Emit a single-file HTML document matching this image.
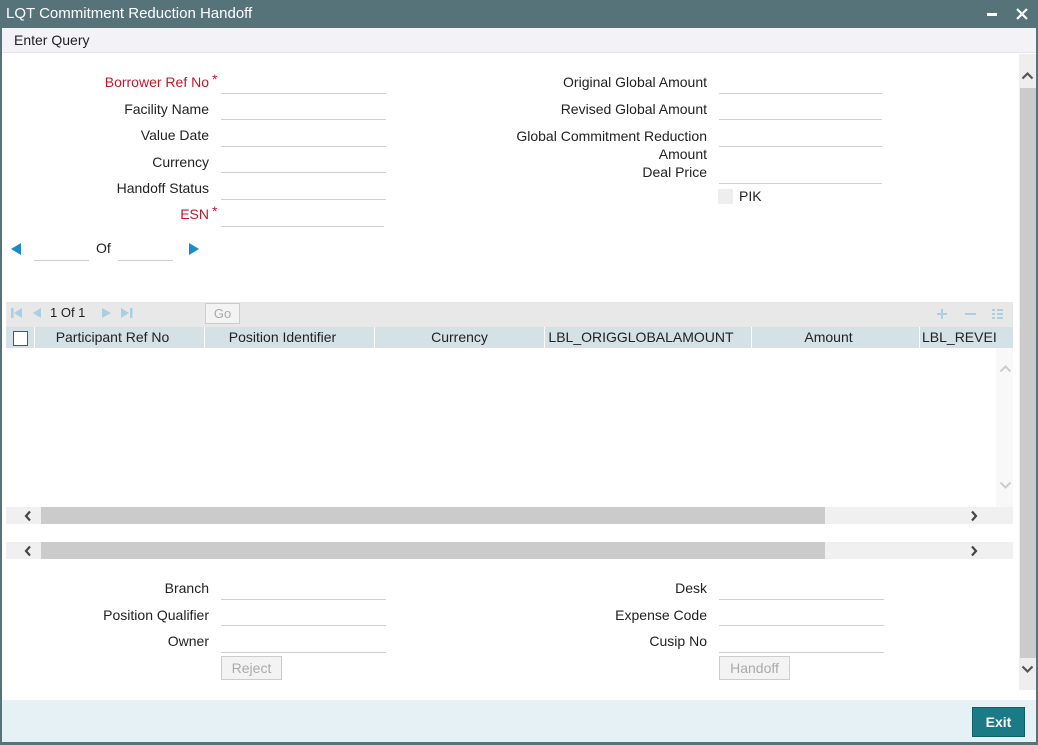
<!DOCTYPE html>
<html><head><style>
*{margin:0;padding:0;box-sizing:border-box}
body{width:1038px;height:745px;position:relative;overflow:hidden;background:#56737a;font-family:"Liberation Sans",Arial,sans-serif;font-size:14px;color:#222}
.a{position:absolute}
.lbl{position:absolute;text-align:right;white-space:nowrap}
.req{color:#c0182a}
.req b{font-weight:normal;position:absolute;top:-3px;left:100%;margin-left:3px}
.ln{position:absolute;height:1px;background:#cfcfcf}
.th{position:absolute;top:327px;height:21px;line-height:21px;text-align:center;border-right:1px solid #fff;color:#222}
.btn{position:absolute;border:1px solid #ccc;background:#f3f3f3;color:#aaa;text-align:center;line-height:22px}
svg{position:absolute}
</style></head><body>
<div class="a" style="left:0;top:0;width:1038px;height:28px;background:#56737a;color:#fff;font-size:15px;line-height:28px;padding-left:6px">LQT Commitment Reduction Handoff</div>
<div class="a" style="left:987px;top:13px;width:10px;height:3px;background:#fff"></div>
<svg style="left:1016px;top:8px" width="12" height="12"><path d="M1 1L11 11M11 1L1 11" stroke="#fff" stroke-width="2.2"/></svg>
<div class="a" style="left:2px;top:28px;width:1034px;height:714px;background:#fff"></div>
<div class="a" style="left:2px;top:28px;width:1034px;height:25px;background:#f2f2f7;border-bottom:1px solid #e4e4e4;line-height:25px;padding-left:12px">Enter Query</div>

<!-- right scrollbar -->
<div class="a" style="left:1019px;top:54px;width:17px;height:636px;background:#eee"></div>
<div class="a" style="left:1020px;top:88px;width:16px;height:570px;background:#cbcbcb"></div>
<svg style="left:1021px;top:71px" width="13" height="9"><path d="M1.5 7.5L6.5 2.5L11.5 7.5" stroke="#555" stroke-width="2.2" fill="none"/></svg>
<svg style="left:1021px;top:665px" width="13" height="9"><path d="M1.5 1.5L6.5 6.5L11.5 1.5" stroke="#555" stroke-width="2.2" fill="none"/></svg>

<!-- left fields -->
<div class="lbl req" style="right:829px;top:74px">Borrower Ref No<b>*</b></div>
<div class="lbl" style="right:829px;top:101px">Facility Name</div>
<div class="lbl" style="right:829px;top:127px">Value Date</div>
<div class="lbl" style="right:829px;top:154px">Currency</div>
<div class="lbl" style="right:829px;top:180px">Handoff Status</div>
<div class="lbl req" style="right:829px;top:206px">ESN<b>*</b></div>
<div class="ln" style="left:221px;top:93px;width:165px"></div>
<div class="ln" style="left:221px;top:119px;width:165px"></div>
<div class="ln" style="left:221px;top:146px;width:165px"></div>
<div class="ln" style="left:221px;top:172px;width:165px"></div>
<div class="ln" style="left:221px;top:199px;width:165px"></div>
<div class="ln" style="left:221px;top:226px;width:163px"></div>
<div class="a" style="left:11px;top:243px;width:0;height:0;border-top:6px solid transparent;border-bottom:6px solid transparent;border-right:10px solid #1a8ac8"></div>
<div class="ln" style="left:34px;top:260px;width:55px"></div>
<div class="a" style="left:96px;top:240px">Of</div>
<div class="ln" style="left:118px;top:260px;width:55px"></div>
<div class="a" style="left:189px;top:243px;width:0;height:0;border-top:6px solid transparent;border-bottom:6px solid transparent;border-left:10px solid #1a8ac8"></div>

<!-- right fields -->
<div class="lbl" style="right:331px;top:74px">Original Global Amount</div>
<div class="lbl" style="right:331px;top:101px">Revised Global Amount</div>
<div class="lbl" style="right:331px;top:127px;line-height:18px">Global Commitment Reduction<br>Amount</div>
<div class="lbl" style="right:331px;top:164px">Deal Price</div>
<div class="ln" style="left:719px;top:93px;width:163px"></div>
<div class="ln" style="left:719px;top:119px;width:163px"></div>
<div class="ln" style="left:719px;top:146px;width:163px"></div>
<div class="ln" style="left:719px;top:183px;width:163px"></div>
<div class="a" style="left:718px;top:189px;width:15px;height:15px;background:#eee"></div>
<div class="a" style="left:739px;top:188px">PIK</div>

<!-- grid -->
<div class="a" style="left:6px;top:302px;width:1007px;height:25px;background:#e8e8e8"></div>
<svg style="left:11px;top:307px" width="36" height="12"><rect x="0" y="1" width="2.5" height="10" fill="#a8cfe2"/><path d="M11 1L3 6L11 11Z M30 1L22 6L30 11Z" fill="#a8cfe2"/></svg>
<div class="a" style="left:50px;top:305px;font-size:13px">1 Of 1</div>
<svg style="left:101px;top:307px" width="34" height="12"><path d="M1 1L10 6L1 11Z M20 1L28 6L20 11Z" fill="#a8cfe2"/><rect x="29" y="1" width="2.5" height="10" fill="#a8cfe2"/></svg>
<div class="btn" style="left:205px;top:303px;width:35px;height:21px;line-height:19px;font-size:13px">Go</div>
<svg style="left:936px;top:308px" width="80" height="12"><path d="M6 1V11M1 6H11" stroke="#a8cfe2" stroke-width="2"/><path d="M29 6H40" stroke="#a8cfe2" stroke-width="2"/><path d="M56 2h3M56 6h3M56 10h3M61 2h6M61 6h6M61 10h6" stroke="#a8cfe2" stroke-width="2"/></svg>
<div class="a" style="left:6px;top:327px;width:1007px;height:21px;background:#d4e1e6"></div>
<div class="th" style="left:6px;width:29px"><span style="display:inline-block;width:15px;height:15px;border:1.5px solid #1a6a85;background:#fff;vertical-align:middle"></span></div>
<div class="th" style="left:35px;width:170px;padding-right:14px">Participant Ref No</div>
<div class="th" style="left:205px;width:170px;padding-right:14px">Position Identifier</div>
<div class="th" style="left:375px;width:170px">Currency</div>
<div class="th" style="left:545px;width:207px;padding-right:14px">LBL_ORIGGLOBALAMOUNT</div>
<div class="th" style="left:752px;width:168px;padding-right:14px">Amount</div>
<div class="th" style="left:920px;width:93px;border:none;text-align:left;padding-left:2px">LBL_REVEI</div>
<div class="a" style="left:996px;top:348px;width:17px;height:159px;background:#f8f8f8"></div>
<svg style="left:999px;top:364px" width="13" height="9"><path d="M1.5 7.5L6.5 2.5L11.5 7.5" stroke="#ccc" stroke-width="2" fill="none"/></svg>
<svg style="left:999px;top:481px" width="13" height="9"><path d="M1.5 1.5L6.5 6.5L11.5 1.5" stroke="#ccc" stroke-width="2" fill="none"/></svg>
<div class="a" style="left:6px;top:507px;width:1007px;height:17px;background:#f0f0f0"></div>
<div class="a" style="left:41px;top:507px;width:784px;height:17px;background:#cbcbcb"></div>
<svg style="left:24px;top:510px" width="8" height="12"><path d="M6 1.5L2 6L6 10.5" stroke="#444" stroke-width="2.2" fill="none"/></svg>
<svg style="left:970px;top:510px" width="8" height="12"><path d="M2 1.5L6 6L2 10.5" stroke="#444" stroke-width="2.2" fill="none"/></svg>
<div class="a" style="left:6px;top:542px;width:1007px;height:17px;background:#f0f0f0"></div>
<div class="a" style="left:41px;top:542px;width:784px;height:17px;background:#cbcbcb"></div>
<svg style="left:24px;top:545px" width="8" height="12"><path d="M6 1.5L2 6L6 10.5" stroke="#444" stroke-width="2.2" fill="none"/></svg>
<svg style="left:970px;top:545px" width="8" height="12"><path d="M2 1.5L6 6L2 10.5" stroke="#444" stroke-width="2.2" fill="none"/></svg>

<!-- bottom fields -->
<div class="lbl" style="right:829px;top:580px">Branch</div>
<div class="lbl" style="right:829px;top:607px">Position Qualifier</div>
<div class="lbl" style="right:829px;top:633px">Owner</div>
<div class="ln" style="left:221px;top:599px;width:165px"></div>
<div class="ln" style="left:221px;top:625px;width:165px"></div>
<div class="ln" style="left:221px;top:652px;width:165px"></div>
<div class="btn" style="left:221px;top:656px;width:61px;height:24px">Reject</div>
<div class="lbl" style="right:331px;top:580px">Desk</div>
<div class="lbl" style="right:331px;top:607px">Expense Code</div>
<div class="lbl" style="right:331px;top:633px">Cusip No</div>
<div class="ln" style="left:719px;top:599px;width:165px"></div>
<div class="ln" style="left:719px;top:625px;width:165px"></div>
<div class="ln" style="left:719px;top:652px;width:165px"></div>
<div class="btn" style="left:719px;top:656px;width:71px;height:24px">Handoff</div>

<!-- footer -->
<div class="a" style="left:2px;top:700px;width:1034px;height:42px;background:#e5f1f4"></div>
<div class="a" style="left:972px;top:707px;width:53px;height:30px;background:#1a7a85;color:#fff;font-weight:bold;text-align:center;line-height:29px;border:1px solid #0f5f68">Exit</div>
</body></html>
